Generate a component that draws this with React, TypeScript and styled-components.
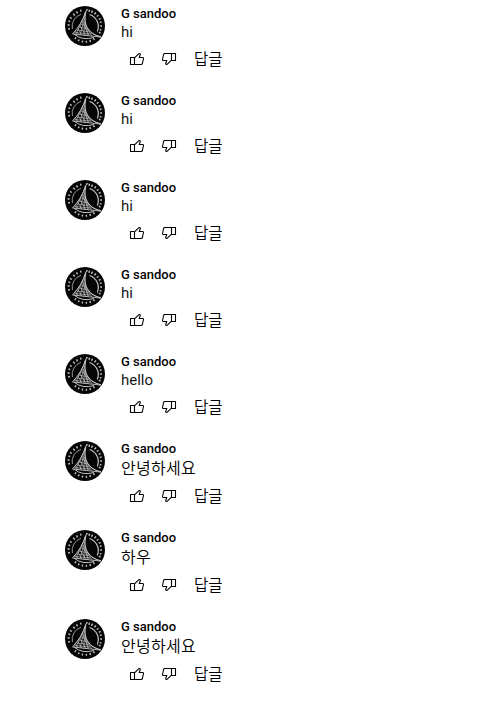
import React from 'react';
import styled, { createGlobalStyle } from 'styled-components';

const GlobalStyle = createGlobalStyle`
  * { box-sizing: border-box; }
  body {
    margin: 0;
    background: #fff;
    color: #030303;
    font-family: Roboto, "Noto Sans CJK KR", sans-serif;
    overflow: hidden;
  }
`;

const List = styled.main`
  display: flex;
  flex-direction: column;
  padding: 6px 0 0 65px;
`;

const Comment = styled.article<{ $tall: boolean }>`
  display: flex;
  gap: 16px;
  height: ${(p) => (p.$tall ? 89 : 87)}px;
`;

const Avatar = styled.svg`
  flex: none;
  width: 40px;
  height: 40px;
`;

const Body = styled.div`
  display: flex;
  flex-direction: column;
`;

const Author = styled.span`
  height: 16px;
  font-size: 13px;
  font-weight: 500;
  line-height: 16px;
  white-space: nowrap;
`;

const Content = styled.p<{ $tall: boolean }>`
  margin: 0;
  height: ${(p) => (p.$tall ? 22 : 20)}px;
  font-size: ${(p) => (p.$tall ? 16 : 15)}px;
  font-weight: ${(p) => (p.$tall ? 350 : 400)};
  letter-spacing: ${(p) => (p.$tall ? 0.3 : 0)}px;
  line-height: ${(p) => (p.$tall ? 24 : 20)}px;
  color: ${(p) => (p.$tall ? '#000' : '#181818')};
  white-space: nowrap;
`;

const Actions = styled.div`
  display: flex;
  align-items: center;
  height: 34px;
`;

const IconButton = styled.button`
  display: flex;
  align-items: center;
  justify-content: center;
  width: 32px;
  height: 32px;
  padding: 0;
  border: 0;
  background: none;
  color: #030303;
`;

const Icon = styled.svg<{ $flipped?: boolean }>`
  width: 14px;
  height: 12px;
  fill: none;
  stroke: currentColor;
  stroke-width: 1.1;
  stroke-linejoin: round;
  overflow: visible;
  transform: ${(p) => (p.$flipped ? 'rotate(180deg)' : 'none')};
`;

const ReplyButton = styled.button`
  height: 32px;
  padding: 3px 8px 0 9px;
  border: 0;
  background: none;
  color: #000;
  font: 350 15.5px/29px Roboto, "Noto Sans CJK KR", sans-serif;
  white-space: nowrap;
`;

const Thumb = ({ flipped = false }: { flipped?: boolean }) => (
  <Icon viewBox="0 0 14 12" $flipped={flipped}>
    <path d="M0.5 4.5H4.5V11.5H0.5Z" />
    <path d="M4.5 4.8L8.9 0.7Q10.5 0.2 10.3 1.5L9.2 4.5H12.7Q13.7 4.6 13.5 5.5L12.4 10.5Q12.1 11.5 11.2 11.5H4.5" />
  </Icon>
);

const Emblem = () => (
  <Avatar viewBox="0 0 40 40" aria-hidden="true">
    <circle cx="20" cy="20" r="20" fill="#050505" />
    <g fill="none" stroke="#c4c4c4">
      <path
        d="M3.2 23L5 22.5M2.6 19H4.6M3.5 15L5.2 15.6M5 11.4L6.7 12.5M8.2 7.8L9.8 9.4M11.5 5.4L12.5 7.3M15.5 3.7L16 5.7M21.3 5L22.3 3M24.5 3.6L24 5.9M27.5 4.6L26.5 6.8M31 6.5L29.4 8.3M33.5 9.2L31.8 10.5M35.6 12.3L33.8 13.3M36.6 16L34.8 16.4M37 20H35.2M36.4 24L34.8 23.6M35.5 27L33.8 26.2M29.5 34L28.4 32.3M25.5 36L24.9 34M21.5 36.8L21.3 34.9M17.2 36.5L17.6 34.6M13.3 35.2L14.2 33.5M9.8 33L11.1 31.4"
        strokeWidth="1.4"
      />
      <path d="M24.5 8.5A12.7 12.7 0 0 1 32.3 25.5" strokeWidth="1.2" />
      <path d="M16 8.3A12.7 12.7 0 0 0 7.4 23" strokeWidth="1" opacity="0.75" />
      <path d="M9 28Q17 35 29 31.5" strokeWidth="1" />
      <path d="M20.7 5.5Q17 18 7.5 28" strokeWidth="1" />
      <path d="M20.7 5.5C18.7 15 20 27 36 31" strokeWidth="1.3" />
      <path d="M7.5 28L35 31" strokeWidth="0.9" />
      <path
        d="M19.7 9L11 28M19.4 12L15 29M19.4 16L19 30M20 19L23 30M21 22L27 30M17 15L24 29M14.8 19L21 30M12.5 22L17 29M10.5 25L14 29M15.5 18L20 19.5M13.5 21L21 22.5M11.5 24L23 25.5M9.5 26.5L26 28"
        strokeWidth="0.75"
        opacity="0.85"
      />
    </g>
  </Avatar>
);

const comments = [
  { text: 'hi' },
  { text: 'hi' },
  { text: 'hi' },
  { text: 'hi' },
  { text: 'hello' },
  { text: '안녕하세요', tall: true },
  { text: '하우', tall: true },
  { text: '안녕하세요', tall: true },
];

export default function App() {
  return (
    <>
      <GlobalStyle />
      <List>
        {comments.map(({ text, tall = false }, index) => (
          <Comment key={index} $tall={tall}>
            <Emblem />
            <Body>
              <Author>G sandoo</Author>
              <Content $tall={tall}>{text}</Content>
              <Actions>
                <IconButton aria-label="좋아요">
                  <Thumb />
                </IconButton>
                <IconButton aria-label="싫어요">
                  <Thumb flipped />
                </IconButton>
                <ReplyButton>답글</ReplyButton>
              </Actions>
            </Body>
          </Comment>
        ))}
      </List>
    </>
  );
}
